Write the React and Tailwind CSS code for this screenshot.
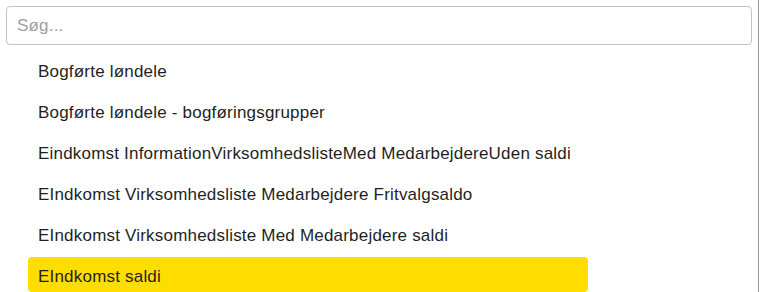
import React, { useState } from 'react';

const ITEMS = [
  'Bogførte løndele',
  'Bogførte løndele - bogføringsgrupper',
  'Eindkomst InformationVirksomhedslisteMed MedarbejdereUden saldi',
  'EIndkomst Virksomhedsliste Medarbejdere Fritvalgsaldo',
  'EIndkomst Virksomhedsliste Med Medarbejdere saldi',
  'EIndkomst saldi',
];

export default function App() {
  const [query, setQuery] = useState('');
  const [active, setActive] = useState(5);

  return (
    <div
      className="w-[759px] h-[292px] overflow-hidden bg-white border-r border-[#9a9a9a]"
      style={{ fontFamily: '"Liberation Sans", Arial, sans-serif' }}
    >
      <div className="pt-[6px] pl-[6px] pr-[6px]">
        <input
          value={query}
          onChange={e => setQuery(e.target.value)}
          placeholder="Søg..."
          className="w-[746px] h-[39px] rounded-[4px] border border-[#c4c4c4] px-[10px] text-[17px] tracking-[0.2px] text-[#222] placeholder:text-[#9aa0a8] outline-none"
        />
      </div>

      {/* Result list */}
      <div className="flex flex-col gap-[6px] pt-[7px] pl-[28px]">
        {ITEMS.filter(t => t.toLowerCase().includes(query.toLowerCase())).map((t, i) => (
          <div
            key={i}
            onMouseEnter={() => setActive(i)}
            className={
              'w-[560px] h-[35px] shrink-0 rounded-[4px] px-[10px] pt-[8px] text-[17px] tracking-[0.2px] leading-6 text-[#1f1f1f] cursor-pointer ' +
              (active === i ? 'bg-[#ffdd00]' : 'bg-white')
            }
          >
            {t}
          </div>
        ))}
      </div>
    </div>
  );
}
